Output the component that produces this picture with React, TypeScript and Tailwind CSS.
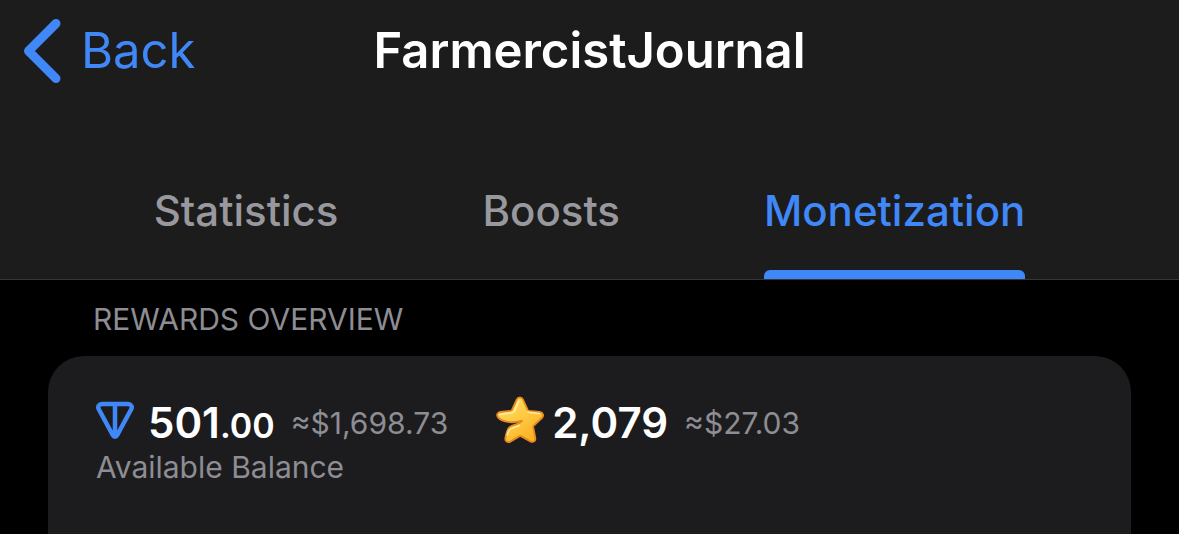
import { useState } from 'react';
import { clsx } from 'clsx';

const tabs = ['Statistics', 'Boosts', 'Monetization'];

const App = () => {
  const [activeTab, setActiveTab] = useState('Monetization');

  return (
    <div className="min-h-screen flex flex-col bg-black font-['Inter',sans-serif] text-white">
      <header className="bg-[#1c1c1c] border-b border-[#363638]">
        <div className="grid grid-cols-[1fr_auto_1fr] items-center h-[102px] px-6">
          <button className="flex items-center gap-5 justify-self-start text-[49px] leading-[60px] text-[#4087f7]">
            <BackIcon />
            Back
          </button>
          <h1 className="text-[49px] leading-[60px] font-semibold">FarmercistJournal</h1>
        </div>

        <nav className="flex justify-center gap-36 pt-[79px]">
          {tabs.map((tab) => (
            <button
              key={tab}
              onClick={() => setActiveTab(tab)}
              className={clsx(
                'flex flex-col text-[42px] leading-[60px] font-medium',
                activeTab === tab ? 'text-[#4087f7]' : 'text-[#98989e]',
              )}
            >
              {tab}
              <span
                className={clsx(
                  'mt-[29px] h-[9px] w-full rounded-t-md',
                  activeTab === tab ? 'bg-[#4087f7]' : 'bg-transparent',
                )}
              />
            </button>
          ))}
        </nav>
      </header>

      <main className="flex flex-col grow px-12 pt-5">
        <h2 className="px-[45px] text-[30px] leading-[38px] text-[#8d8d93]">REWARDS OVERVIEW</h2>
        <section className="mt-[18px] grow rounded-t-[36px] bg-[#1c1c1e] px-12 pt-10">
          <div className="flex items-start">
            <TonIcon />
            <p className="ml-[14px] text-[42px] leading-[54px] font-semibold">
              501<span className="text-[34px] leading-none">.00</span>
            </p>
            <Estimate value="≈$1,698.73" />
            <StarIcon />
            <p className="ml-2 text-[42px] leading-[54px] font-semibold">2,079</p>
            <Estimate value="≈$27.03" />
          </div>
          <p className="text-[30px] leading-[34px] text-[#8d8d93]">Available Balance</p>
        </section>
      </main>
    </div>
  );
};

const Estimate = ({ value }: { value: string }) => (
  <span className="ml-4 text-[30px] leading-[54px] text-[#8d8d93]">{value}</span>
);

const BackIcon = () => (
  <svg width="37" height="64" viewBox="0 0 37 64" fill="none" aria-hidden="true">
    <path d="M32 4.5 4.5 32 32 59.5" stroke="currentColor" strokeWidth="9" strokeLinecap="round" strokeLinejoin="round" />
  </svg>
);

const TonIcon = () => (
  <svg width="38" height="48" viewBox="0 0 38 48" fill="none" aria-hidden="true">
    <path
      d="M6 8h26c3 0 4.600 2.700 3.200 5.300L21 39.500c-.9 1.600-3.100 1.600-4 0L2.800 13.300C1.400 10.700 3 8 6 8ZM19 8v31"
      stroke="#4087f7"
      strokeWidth="4.5"
      strokeLinejoin="round"
    />
  </svg>
);

const StarIcon = () => (
  <svg className="ml-12" width="48" height="48" viewBox="0 0 48 48" aria-hidden="true">
    <defs>
      <linearGradient id="starFill" x1="10" y1="4" x2="38" y2="44" gradientUnits="userSpaceOnUse">
        <stop stopColor="#ffdc62" />
        <stop offset=".5" stopColor="#fdc83f" />
        <stop offset="1" stopColor="#fcaf22" />
      </linearGradient>
    </defs>
    <path
      d="M20.800 3.400c1.300-2.700 4.800-2.700 6.100 0l4.700 10.300c.3.600.8 1 1.500 1.100l10.800 1.200c3.200.4 4.300 3.800 2 6l-8.100 7.500c-.5.500-.7 1.100-.6 1.700l2.100 10.600c.6 3.200-2.200 5.100-4.900 3.600l-9-5c-.7-.4-1.500-.4-2.200 0l-8.500 5c-3.100 1.800-5.900-.2-5.300-3.500 .9-5 1.900-8.400 3.900-10.600 3-3 10-2.600 12.700-6.600-5.500 1.500-12 2-16.500.7-3.600-1-6.400-2.700-7.600-4.300-1.700-2.300-.4-4.700 2.500-5.100l10.200-1.200c.7-.1 1.200-.5 1.500-1.100Z"
      fill="url(#starFill)"
      stroke="#e58a20"
      strokeWidth="1.800"
      strokeLinejoin="round"
    />
    <path
      d="M3.500 18.300l13-1.700c.8-.1 1.400-.6 1.700-1.300L22.700 5.500M32 16.200l11.500 1.500M11.300 39c.8-3.700 1.700-5.500 3.800-6.500 3-1.400 6-1.600 8.400-3"
      fill="none"
      stroke="#fff1b0"
      strokeWidth="1.800"
      strokeLinecap="round"
      strokeLinejoin="round"
      opacity=".8"
    />
  </svg>
);

export default App;
